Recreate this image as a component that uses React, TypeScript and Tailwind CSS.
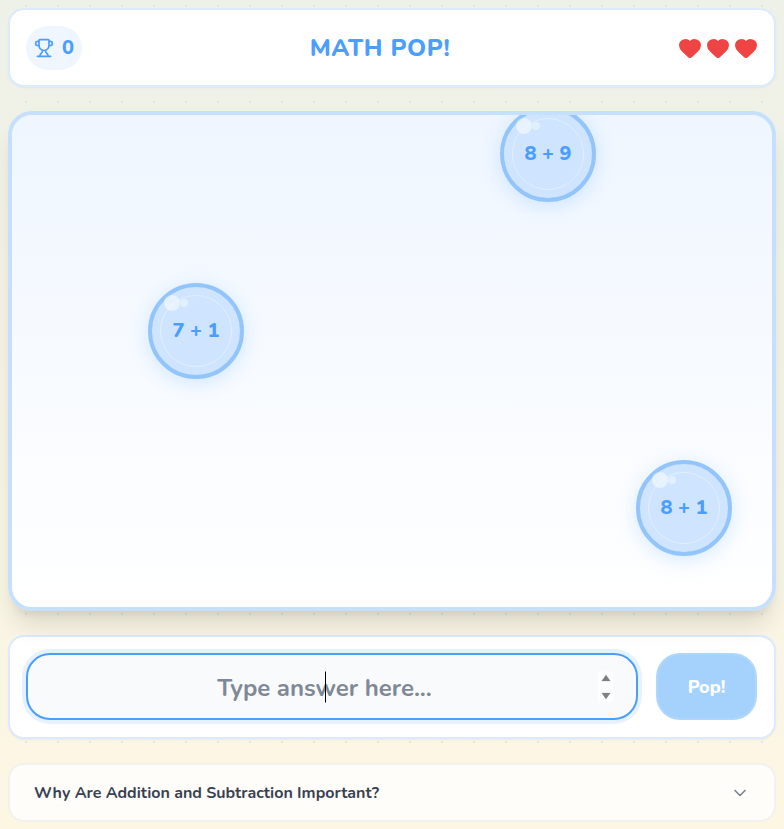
import { ChevronDown, Heart, Trophy } from 'lucide-react';

const bubbles = [
  { label: '8 + 9', pos: 'left-[488px] top-[-9px]' },
  { label: '7 + 1', pos: 'left-[136px] top-[168px]' },
  { label: '8 + 1', pos: 'left-[624px] top-[345px]' },
];

const Bubble = ({ label, pos }: { label: string; pos: string }) => (
  <div className={`absolute ${pos} flex h-24 w-24 items-center justify-center rounded-full border-4 border-[#93c5fd] bg-[#cfe4fe] shadow-[0_4px_20px_rgba(74,158,255,0.22)]`}>
    <div className="absolute inset-2 rounded-full border border-white/40"></div>
    <div className="absolute left-3 top-2 h-4 w-4 rounded-full bg-white/50"></div>
    <div className="absolute left-7 top-3 h-2 w-2 rounded-full bg-white/40"></div>
    <span className="relative text-xl font-extrabold text-[#4a9eff]">{label}</span>
  </div>
);

export default function App() {
  return (
    <div className="flex min-h-screen flex-col gap-6 bg-[image:radial-gradient(circle,#e2e5d9_1px,transparent_1.2px),linear-gradient(to_bottom,#eef1e7,#fdf6e3)] bg-[length:32px_32px,100%_100%] bg-[position:10px_-10px,0_0] p-2 font-['Nunito','Noto_Sans',sans-serif]">
      {/* Header */}
      <header className="flex h-[79px] items-center justify-between rounded-2xl border-2 border-[#dbeafe] bg-white px-4 shadow-[0_1px_2px_rgba(74,158,255,0.1)]">
        <div className="flex h-11 w-14 items-center gap-2 rounded-full bg-[#eff6ff] pl-2 text-[#4a9eff]">
          <Trophy size={20} strokeWidth={2} />
          <span className="text-xl font-extrabold">0</span>
        </div>
        <h1 className="text-2xl font-extrabold tracking-wide text-[#4a9eff]">MATH POP!</h1>
        <div className="flex gap-1">
          <Heart size={24} className="fill-[#ef4444] text-[#ef4444]" />
          <Heart size={24} className="fill-[#ef4444] text-[#ef4444]" />
          <Heart size={24} className="fill-[#ef4444] text-[#ef4444]" />
        </div>
      </header>

      {/* Game area */}
      <main className="relative h-[500px] shrink-0 overflow-hidden rounded-3xl border-4 border-[#c5e0fe] bg-gradient-to-b from-[#eff6ff] to-white shadow-xl">
        {bubbles.map((b) => (
          <Bubble key={b.label} label={b.label} pos={b.pos} />
        ))}
      </main>

      {/* Answer form */}
      <form className="flex h-[104px] items-start gap-[18px] rounded-2xl border-2 border-[#dbeafe] bg-white pl-4 pr-[17px] pt-4 shadow-[0_1px_2px_rgba(74,158,255,0.1)]">
        <div className="relative min-w-0 flex-1">
          <input
            type="number"
            autoFocus
            placeholder="Type answer here..."
            className="block h-[67px] w-full rounded-3xl border-2 border-[#4a9eff] bg-[#f8fafc] pl-6 pr-[39px] pt-[2px] text-center text-2xl font-bold outline-none ring-4 ring-[#e6f2ff] placeholder:text-[#7f8896] [&::-webkit-inner-spin-button]:appearance-none"
          />
          {/* caret */}
          <span className="absolute left-[299px] top-1/2 h-[31px] w-px -translate-y-1/2 bg-black"></span>
          {/* spinner */}
          <span className="absolute right-[25px] top-1/2 flex h-[31px] w-[15px] -translate-y-1/2 flex-col items-center justify-between bg-white/70 py-[3px]">
            <svg width="10" height="7" viewBox="0 0 10 7">
              <path d="M5 0.3 L9.6 6.7 H0.4 Z" fill="#808080" />
            </svg>
            <svg width="10" height="7" viewBox="0 0 10 7">
              <path d="M5 6.7 L9.6 0.3 H0.4 Z" fill="#808080" />
            </svg>
          </span>
        </div>
        <button
          type="button"
          disabled
          className="h-[67px] w-[101px] rounded-3xl border-2 border-white/10 bg-[#a5d2fd] text-lg font-extrabold text-white"
        >
          Pop!
        </button>
      </form>

      {/* FAQ */}
      <section className="flex h-[59px] items-center justify-between rounded-2xl border-2 border-[#f1f1ee] bg-white/80 pl-6 pr-6">
        <h2 className="text-base font-bold text-[#374151]">Why Are Addition and Subtraction Important?</h2>
        <ChevronDown size={20} className="text-[#7c8494]" />
      </section>
    </div>
  );
}
